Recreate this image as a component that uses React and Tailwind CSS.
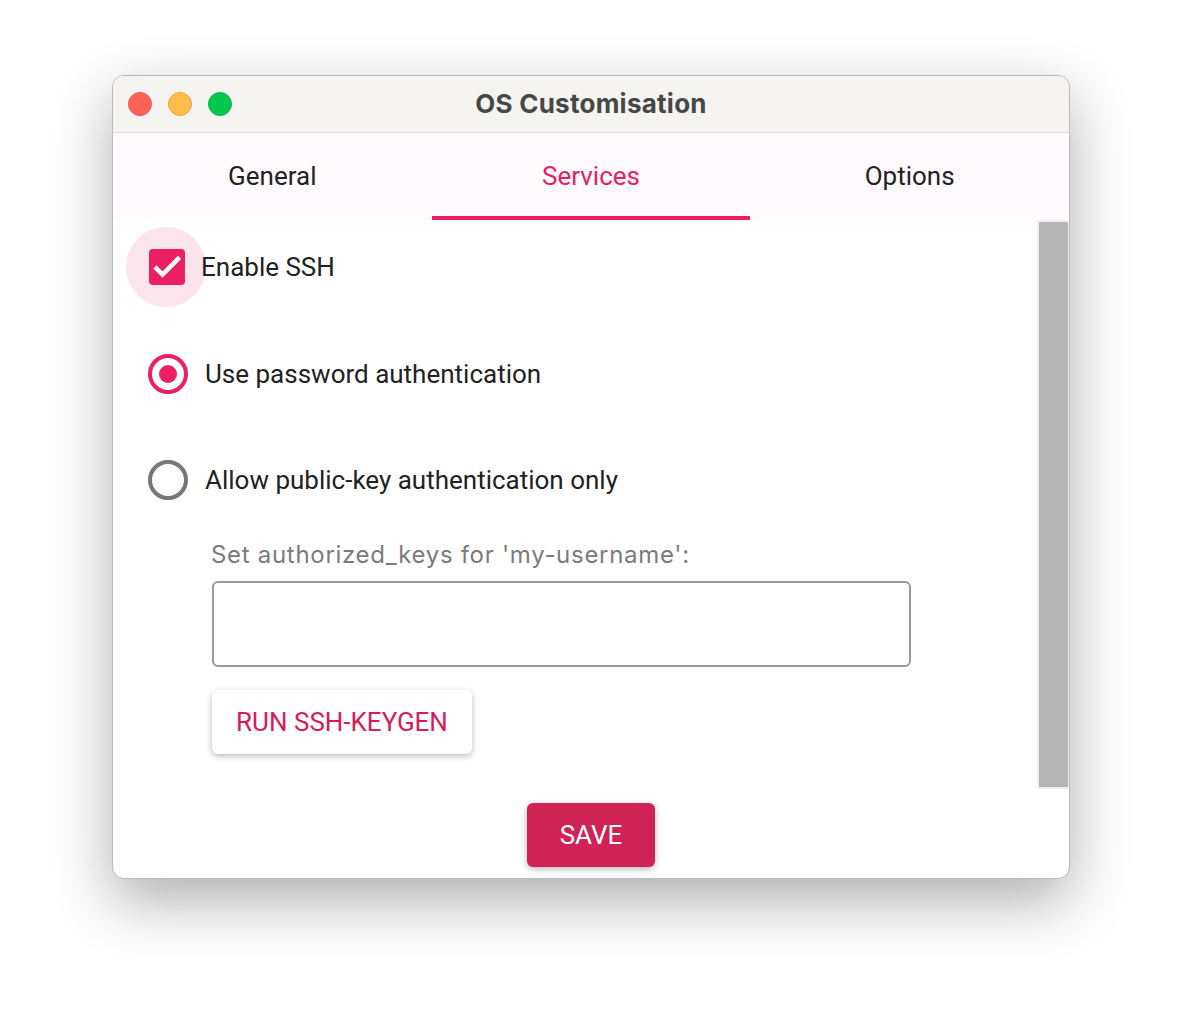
import React from "react";

export default function App() {
  return (
    <div className="w-[1182px] h-[1013px] bg-white pt-[75px] pl-[112px]" style={{ fontFamily: "Roboto, 'Liberation Sans', sans-serif" }}>
      <div className="w-[958px] h-[804px] rounded-[12px] bg-white overflow-hidden flex flex-col border border-[#b9b9b9] shadow-[0_22px_60px_rgba(0,0,0,0.32)]">
        {/* title bar */}
        <div className="h-[57px] shrink-0 bg-[#f5f4f1] border-b border-[#dcdcdc] flex items-center relative">
          <div className="flex items-center gap-[16px] pl-[15px]">
            <span className="w-[24px] h-[24px] rounded-full bg-[#fe6158] border border-[#e5534b]" />
            <span className="w-[24px] h-[24px] rounded-full bg-[#ffbe4b] border border-[#e3a73b]" />
            <span className="w-[24px] h-[24px] rounded-full bg-[#02c84f] border border-[#06b546]" />
          </div>
          <div className="absolute inset-0 pb-[2px] flex items-center justify-center text-[26px] font-bold tracking-[0.25px] text-[#474747]" style={{ fontFamily: "Inter, 'Open Sans', sans-serif" }}>
            OS Customisation
          </div>
        </div>
        {/* tabs */}
        <div className="h-[87px] shrink-0 bg-[#fefafe] grid grid-cols-3">
          <div className="flex items-center justify-center text-[26px] text-[#222]">General</div>
          <div className="relative flex items-center justify-center text-[26px] text-[#e91e63]">
            Services
            <div className="absolute left-0 right-0 bottom-0 h-[4px] bg-[#e91e63]" />
          </div>
          <div className="flex items-center justify-center text-[26px] text-[#222]">Options</div>
        </div>
        {/* content */}
        <div className="h-[569px] shrink-0 flex">
          <div className="flex-1 pl-[35px] flex flex-col">
            <div className="mt-[27px] h-[40px] flex items-center relative">
              <span className="absolute left-[-22px] top-[-20px] w-[80px] h-[80px] rounded-full bg-[#fce4ec]" />
              <span className="relative ml-[1px] w-[36px] h-[36px] rounded-[4px] bg-[#eb1f63] flex items-center justify-center">
                <svg width="36" height="36" viewBox="0 0 36 36" fill="none" stroke="white" strokeWidth="4.5" strokeLinecap="square">
                  <path d="M7.5 19.5l6 6L29 10" />
                </svg>
              </span>
              <span className="relative ml-[16px] text-[26px] text-[#222]">Enable SSH</span>
            </div>
            <div className="mt-[67px] h-[40px] flex items-center">
              <span className="w-[40px] h-[40px] rounded-full border-[4px] border-[#eb1f63] flex items-center justify-center">
                <span className="w-[18px] h-[18px] rounded-full bg-[#eb1f63]" />
              </span>
              <span className="ml-[17px] text-[26px] text-[#222]">Use password authentication</span>
            </div>
            <div className="mt-[66px] h-[40px] flex items-center">
              <span className="w-[40px] h-[40px] rounded-full border-[4px] border-[#767676]" />
              <span className="ml-[17px] text-[26px] text-[#222]">Allow public-key authentication only</span>
            </div>
            <div className="ml-[63px] mt-[41px] h-[28px] leading-[28px] text-[24px] tracking-[0.7px] text-[#7b7b7b]" style={{ fontFamily: "Inter, 'Open Sans', sans-serif" }}>Set authorized_keys for 'my-username':</div>
            <div className="ml-[64px] mt-[12px] w-[699px] h-[86px] rounded-[6px] border-2 border-[#9a9a9a]" />
            <div className="ml-[64px] mt-[23px] w-[260px] h-[64px] rounded-[6px] bg-white shadow-[0_2px_6px_rgba(0,0,0,0.28)] flex items-center justify-center text-[26px] text-[#d81b5a]">
              RUN SSH-KEYGEN
            </div>
          </div>
          <div className="w-[32px] h-full bg-[#efefef] p-[2px] pr-[1px]">
            <div className="w-full h-full bg-[#b4b4b4]" />
          </div>
        </div>
        {/* save */}
        <div className="flex-1 flex justify-center pt-[14px]">
          <div className="w-[128px] h-[64px] rounded-[6px] bg-[#cf2355] shadow-[0_2px_6px_rgba(0,0,0,0.3)] flex items-center justify-center text-[26px] text-white">
            SAVE
          </div>
        </div>
      </div>
    </div>
  );
}
